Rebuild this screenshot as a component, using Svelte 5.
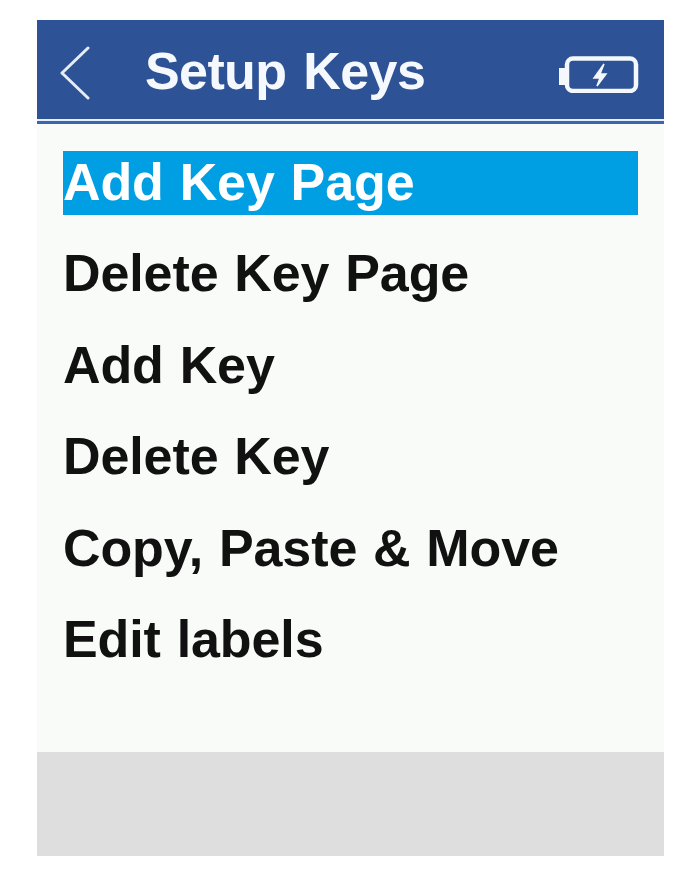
<script>
  const items = ["Add Key Page", "Delete Key Page", "Add Key", "Delete Key", "Copy, Paste & Move", "Edit labels"];
  let selected = 0;
</script>

<main>
  <div class="screen">
    <header>
      <svg class="back" width="32" height="54" viewBox="0 0 32 54">
        <path d="M28 2 L2 27 L28 52" fill="none" stroke="#e6edf6" stroke-width="3" stroke-linejoin="round" stroke-linecap="round" />
      </svg>
      <h1>Setup Keys</h1>
      <svg class="battery" width="81" height="40" viewBox="0 0 81 40">
        <rect x="1" y="15" width="6" height="17" fill="#f4f7fb" />
        <rect x="9" y="5.5" width="69" height="32.5" rx="6" fill="none" stroke="#f4f7fb" stroke-width="4.5" />
        <path d="M46 11 L36 25 L42 25 L39 33 L48 21 L42 21 Z" fill="#f4f7fb" stroke="#f4f7fb" stroke-width="1.5" />
      </svg>
    </header>
    <ul>
      {#each items as item, i}
        <li class:selected={i === selected}>{item}</li>
      {/each}
    </ul>
    <footer></footer>
  </div>
</main>

<style>
  :global(body) {
    background: #fff;
    font-family: "Liberation Sans", Arial, sans-serif;
  }

  main {
    padding: 20px 27px 26px 37px;
  }

  .screen {
    display: flex;
    flex-direction: column;
    height: 836px;
    background: #f9fbf9;
  }

  header {
    display: flex;
    align-items: center;
    height: 101px;
    padding: 7px 25px 0 23px;
    box-sizing: border-box;
    background: #2e5296;
    border-bottom: 2px solid #e8eff8;
    box-shadow: 0 3px 0 #3a66ad;
  }

  .back {
    flex: none;
  }

  h1 {
    flex: 1;
    margin: 0 0 4px 53px;
    font-size: 52px;
    font-weight: bold;
    letter-spacing: -0.6px;
    word-spacing: 3px;
    color: #f5f8fc;
  }

  ul {
    flex: 1;
    list-style: none;
    margin: 0;
    padding: 30px 26px 0;
  }

  li {
    height: 64px;
    margin-bottom: 27.4px;
    font-size: 52px;
    line-height: 62px;
    font-weight: bold;
    letter-spacing: -0.1px;
    word-spacing: 1.5px;
    color: #111;
  }

  li.selected {
    background: #009fe3;
    color: #fff;
  }

  footer {
    height: 104px;
    background: #dedede;
  }
</style>
